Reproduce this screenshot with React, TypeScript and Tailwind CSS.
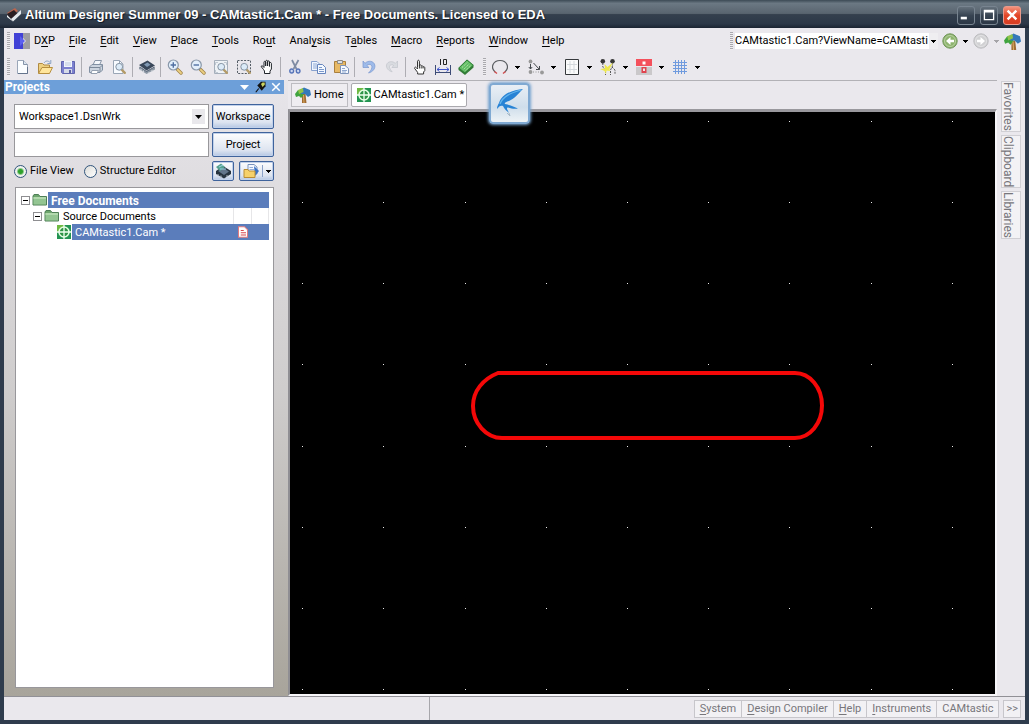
import React from "react";

type IconProps = { children: React.ReactNode; size?: string; box?: string };

function Icon({ children, size = "size-4", box = "0 0 16 16" }: IconProps) {
  return (
    <svg viewBox={box} className={`${size} shrink-0`} fill="none" aria-hidden="true">
      {children}
    </svg>
  );
}

const Caret = ({ color = "#000" }: { color?: string }) => (
  <svg viewBox="0 0 5 3" className="h-[3px] w-[5px] shrink-0" aria-hidden="true" shapeRendering="crispEdges">
    <path d="M0 0H5V1H4V2H3V3H2V2H1V1H0Z" fill={color} />
  </svg>
);

const Grip = () => (
  <span className="h-[18px] w-[3px] shrink-0 bg-[repeating-linear-gradient(to_bottom,#a9a8ad_0_1px,#efeef1_1px_2px)]" />
);

const Glass = () => (
  <>
    <path d="M10.5 10.5L14 14" stroke="#a18448" strokeWidth="3.4" strokeLinecap="round" />
    <path d="M10.8 10.8L14 14" stroke="#ecd083" strokeWidth="1.8" strokeLinecap="round" />
    <circle cx="6.3" cy="6" r="5" fill="#e2effb" stroke="#8998aa" strokeWidth="1.2" />
  </>
);

const SmallGlass = () => (
  <>
    <path d="M10.5 10.5L13.8 13.8" stroke="#b39b68" strokeWidth="2.4" strokeLinecap="round" />
    <circle cx="8.2" cy="7.8" r="3.4" fill="#dcebf8" stroke="#8593a3" />
  </>
);

const icons = {
  fresh: (
    <>
      <path d="M3.5 1.5H9.5L13.5 5.5V14.5H3.5Z" fill="#fbfdff" stroke="#9aa6b8" />
      <path d="M9.5 1.5V5.5H13.5" fill="#dbe5f1" stroke="#8593a8" />
      <path d="M4 14.5H13.5V8" stroke="#64748c" />
    </>
  ),
  open: (
    <>
      <path d="M1.5 14V4.5H5.5L7 6H12.5V14Z" fill="#eed080" stroke="#b08a42" />
      <path d="M1.5 14.5L5 8.5H15.5L12.5 14.5Z" fill="#ffe59b" stroke="#b68e3f" />
      <path d="M7 4C8.5 1.5 11 1.5 13 3.4M13.8 1V4.5H10.4" stroke="#8ba3c4" />
    </>
  ),
  save: (
    <>
      <path d="M1.5 2.5H14.5V14.5H2.5L1.5 13.5Z" fill="#7c80cf" stroke="#6065ad" />
      <path d="M4 2H12V8H4Z" fill="#f1f5fb" />
      <path d="M5 4H11M5 6H11" stroke="#bdc8dd" />
      <path d="M4 10H12V14H4Z" fill="#d6dbe8" />
      <path d="M9 11H11V14H9Z" fill="#5b60a3" />
    </>
  ),
  print: (
    <>
      <path d="M5 6L7 1.5H13.5L11.5 6Z" fill="#f5f8fc" stroke="#8794a6" />
      <path d="M1.5 8L4 5.5H14.5V11L12 13.5H1.5Z" fill="#ccd4df" stroke="#8190a3" />
      <path d="M1.5 8.5H12L14.5 6M12 8.5V13" stroke="#7c899a" />
      <path d="M4 11.5H10.5L9 14.5H3Z" fill="#fff" stroke="#95a0b0" />
    </>
  ),
  preview: (
    <>
      <path d="M2.5 1.5H8.5L12 5V14.5H2.5Z" fill="#f8fbff" stroke="#9aa6b6" />
      <path d="M8.5 1.5V5H12" stroke="#9aa6b6" />
      <SmallGlass />
    </>
  ),
  chip: (
    <>
      <path d="M0 7.5L7 12L16 8V10.5L7.5 15L0 10Z" fill="#8d98a4" />
      <path d="M0 6L8.5 1.5L16 6.5L7.5 11.5Z" fill="#39475a" />
      <path d="M5 5.5L8.5 3.5L11.5 5.7L8 8Z" fill="#8199b4" />
      <path d="M1 8L7.5 12.5L15.5 8" stroke="#59677a" />
      <path d="M2 10V12M4.5 11.5V13.5M10 13V14.5M13 11V13" stroke="#d5dae0" />
    </>
  ),
  zoomIn: (
    <>
      <Glass />
      <path d="M3.6 6H9M6.3 3.3V8.7" stroke="#4f70a2" strokeWidth="1.4" />
    </>
  ),
  zoomOut: (
    <>
      <Glass />
      <path d="M3.6 6H9" stroke="#4f70a2" strokeWidth="1.4" />
    </>
  ),
  zoomFit: (
    <>
      <path d="M1.5 1.5H14.5V14.5H1.5Z" fill="#eef2f6" stroke="#a5afbb" />
      <path d="M2.5 6V3.5H5M11 3.5H13.5V6M2.5 11V13.5H5" stroke="#c0c8d2" />
      <SmallGlass />
    </>
  ),
  zoomArea: (
    <>
      <path d="M1.5 1.5H14.5V14.5H1.5Z" stroke="#555d66" strokeDasharray="2 1.3" />
      <SmallGlass />
    </>
  ),
  hand: (
    <path
      d="M4.5 10.5L2.5 8C1.8 6.8 3 6.3 3.8 7.2L5 8.5V3.2C5 2 6.5 2 6.7 3.2V7V2.2C7 1 8.4 1 8.6 2.2V7V2.7C8.9 1.6 10.3 1.6 10.5 2.8V7.4V4.2C10.9 3.2 12.2 3.3 12.4 4.4V10L11 12.2V14.5H5.5V12Z"
      fill="#fff"
      stroke="#20242a"
    />
  ),
  cut: (
    <>
      <path d="M5 1L9.5 10M11.5 1L6.5 10" stroke="#7e8ba3" strokeWidth="1.7" />
      <path d="M4.5 10C2.2 10 2.2 14 4.7 14C7 14 7.5 10 4.5 10ZM11 10C8.5 10 8.9 14 11.2 14C13.7 14 13.5 10 11 10Z" fill="#cdd8f0" stroke="#5674b8" strokeWidth="1.4" />
    </>
  ),
  copy: (
    <>
      <path d="M1.5 2.5H7L9.5 5V11.5H1.5Z" fill="#f1f6ff" stroke="#86a0ce" />
      <path d="M3 5H7M3 7H8M3 9H8" stroke="#8fa8d3" />
      <path d="M7.5 5.5H12.5L15.5 8.5V14.5H7.5Z" fill="#f5f9ff" stroke="#6685bd" />
      <path d="M9 8.5H12M9 10.5H14M9 12.5H14" stroke="#7b98cb" />
    </>
  ),
  paste: (
    <>
      <path d="M1.5 2.5H12.5V13.5H1.5Z" fill="#e8b964" stroke="#a97f3d" />
      <path d="M4.5 1.5H9.5V4.5H4.5Z" fill="#d9dee5" stroke="#8e8a82" />
      <path d="M7.5 6.5H12L15.5 9.5V14.5H7.5Z" fill="#f5f9ff" stroke="#7d93b8" />
      <path d="M9 9.5H12M9 11.5H14M9 13H13" stroke="#90a8cf" />
    </>
  ),
  undo: (
    <path d="M2 2V8.5H8L5.8 6.5C8.5 4.2 11.8 6 10.8 9C10.3 11 9 12.4 7.5 14C12 12.8 14.5 9.5 13.8 6C12.7 1.8 7.2 1 4 4.3Z" fill="#9ebbea" stroke="#7897cf" strokeWidth=".7" />
  ),
  redo: (
    <path d="M13.5 2V8.5H7.8L9.8 6.6C7.5 4.8 4.8 6.2 5.6 8.8C6 10.3 7 11.5 8.2 12.8C4.5 12 2 9 2.5 6C3.4 2.3 8.5 1.5 11.4 4.4Z" fill="#d9dbe0" stroke="#c1c4cb" strokeWidth=".7" />
  ),
  pointer: (
    <path
      d="M5.5 8.5V2.2C5.8 .9 7.1 .9 7.4 2.2V7V6.3C8 5.4 9 5.7 9.2 6.7V7.3C9.8 6.3 10.8 6.7 11 7.6V8.2C11.6 7.3 12.7 7.6 12.8 8.7V11.5L11.6 13V15H5.6V13.3L2.6 9.4C2.4 8.1 3.7 7.7 4.3 8.6L5.5 10ZM7.4 7V9.5M9.2 7.5V9.5M11 8V9.5"
      fill="#fff"
      stroke="#333"
    />
  ),
  measure: (
    <>
      <path d="M.5 6V16M15.5 6V16M0 13.5H16" stroke="#3d4b76" />
      <path d="M2 10.5H14M4.5 8.5L2 10.5L4.5 12.5M11.5 8.5L14 10.5L11.5 12.5" stroke="#4055cd" />
      <path d="M5.5 0V6M8.5 .5H11.5V5.5H8.5Z" stroke="#222" />
    </>
  ),
  board: (
    <>
      <path d="M.5 9L9 .5L15.5 6V8.5L7 16L.5 11Z" fill="#357c38" />
      <path d="M.8 9L9 1L15.2 6.3L6.8 13.8Z" fill="#63bd66" stroke="#2b7933" strokeWidth=".8" />
      <path d="M4 8.5L9.4 3.5M5.8 10.2L11.2 5M7.500 11.6L13 6.5" stroke="#b3e6a7" strokeDasharray="1.5 .8" />
    </>
  ),
  arc: (
    <>
      <path d="M3 13C-2 8.5 1.2 1.5 8 1.5C14.8 1.5 18 8.5 13 13" stroke="#5a5d61" strokeWidth="1.2" />
      <path d="M2.5 12.5L5 14.5M13.5 12.5L11 14.5" stroke="#d0484a" strokeWidth="1.4" />
    </>
  ),
  nodes: (
    <>
      <circle cx="2.5" cy="2.5" r="1.9" fill="#999" />
      <circle cx="2.5" cy="13" r="1.9" fill="#999" />
      <circle cx="14" cy="13.5" r="1.9" fill="#999" />
      <path d="M2.5 5V10M.8 8L2.5 10L4.2 8M5.5 4L11.5 10.5M11.5 7V10.5H8" stroke="#44484c" />
      <path d="M5 13H11" stroke="#999" strokeDasharray="1 1.5" />
    </>
  ),
  rect: (
    <>
      <path d="M1.5 .5H14.5V15.5H1.5Z" fill="#fafafa" stroke="#35383b" />
      <path d="M3 5.5H13M3 10.5H13M6 2V14M10 2V14" stroke="#d4d8dc" />
    </>
  ),
  probes: (
    <>
      <path d="M2.8 4V8L5.5 11V16M12.5 3.5V7L10.5 11V16M12 8L15 11V15" stroke="#585858" strokeDasharray="2 1" />
      <circle cx="2.8" cy="2.3" r="2.3" fill="#353535" />
      <circle cx="12.5" cy="2.3" r="2.3" fill="#353535" />
      <path d="M0 10L5 9.5L4.5 5L7.5 8L13 3.5L9.5 10L10 12L6.5 11.5L6 15L4.5 12Z" fill="#eee84c" />
    </>
  ),
  pads: (
    <>
      <path d="M0 0H16V7H0Z" fill="#f4505c" />
      <path d="M0 8H16V16H0Z" fill="#cac8ca" />
      <path d="M5.5 8H10.5V14H5.5Z" fill="#e0434f" />
      <path d="M6.5 2.5H9.5V5.5H6.5Z" fill="#fff" />
      <path d="M7 9.5H9V12H7Z" fill="#f3e4e6" />
    </>
  ),
  grid: <path d="M3.5 1V15M6.5 1V15M9.5 1V15M12.5 1V15M1 3.5H15M1 6.5H15M1 9.5H15M1 12.5H15" stroke="#6f9ade" />,
};

const Tree = () => (
  <>
    <path d="M7 7H10.5L11.5 16H7Z" fill="#a06b32" />
    <path d="M0 7L3 3L7 4L9 8L6 11L4 9L1 10Z" fill="#3fa33e" />
    <path d="M5 3L9 .5L15 3L16 8L13 10L10 7L6 7Z" fill="#3479b9" />
    <path d="M3 3L8 1L8.5 5L4 7Z" fill="#8fc34a" />
    <path d="M8.5 8L9 16" stroke="#d9ad64" />
  </>
);

const CamGlyph = () => (
  <>
    <path d="M1 1H15V15H1Z" fill="#239451" />
    <path d="M1 1H8V8H1Z" fill="#6fba42" />
    <circle cx="8" cy="8" r="5" fill="#2e9446" stroke="#e6ffe3" strokeWidth="1.5" />
    <path d="M8 1V15M1 8H15" stroke="#effff0" strokeWidth="1.3" />
  </>
);

const Folder = () => (
  <>
    <path d="M1 13V4L2 2.5H6.5L8 4.5H14.5V13Z" fill="#6da56d" stroke="#4e7f56" />
    <path d="M1.5 5H14V12.5H1.5Z" fill="#93c592" />
    <path d="M1.5 5H14V7H1.5Z" fill="#b2d9ad" />
  </>
);

const Chip3D = () => (
  <>
    <path d="M1 8L8 3L16 8V11L9 15.5L1 11Z" fill="#26333f" />
    <path d="M3 8L8.5 5L14 8.5L9 12Z" fill="#62758a" />
    <path d="M1 4L6 .5L10 4L5 8Z" fill="#55a18f" />
    <path d="M4 4L8 2M5 6L11 6" stroke="#98d1e2" />
    <path d="M3 11V13M6 12.5V15M12 12V14" stroke="#b4bdc6" />
  </>
);

type Tool = { name: string; icon: React.ReactNode };

const toolGroups: Tool[][] = [
  [
    { name: "New", icon: icons.fresh },
    { name: "Open", icon: icons.open },
    { name: "Save", icon: icons.save },
  ],
  [
    { name: "Print", icon: icons.print },
    { name: "Print preview", icon: icons.preview },
  ],
  [{ name: "Devices", icon: icons.chip }],
  [
    { name: "Zoom in", icon: icons.zoomIn },
    { name: "Zoom out", icon: icons.zoomOut },
    { name: "Fit document", icon: icons.zoomFit },
    { name: "Zoom area", icon: icons.zoomArea },
    { name: "Pan", icon: icons.hand },
  ],
  [
    { name: "Cut", icon: icons.cut },
    { name: "Copy", icon: icons.copy },
    { name: "Paste", icon: icons.paste },
  ],
  [
    { name: "Undo", icon: icons.undo },
    { name: "Redo", icon: icons.redo },
  ],
  [
    { name: "Query", icon: icons.pointer },
    { name: "Measure", icon: icons.measure },
    { name: "Board", icon: icons.board },
  ],
];

const dropTools: Tool[] = [
  { name: "Arc", icon: icons.arc },
  { name: "Nodes", icon: icons.nodes },
  { name: "Rectangle", icon: icons.rect },
  { name: "Probes", icon: icons.probes },
  { name: "Pads", icon: icons.pads },
  { name: "Grid", icon: icons.grid },
];

/* The letter after the "&" is the access key and is underlined. */
function Accel({ label }: { label: string }) {
  const at = label.indexOf("&");
  if (at < 0) return <>{label}</>;
  return (
    <>
      {label.slice(0, at)}
      <span className="underline underline-offset-2">{label[at + 1]}</span>
      {label.slice(at + 2)}
    </>
  );
}

const menus = ["&File", "&Edit", "&View", "&Place", "&Tools", "Ro&ut", "Anal&ysis", "T&ables", "&Macro", "&Reports", "&Window", "&Help"];

function TitleBar() {
  const box = "flex h-[19px] w-[18px] items-center justify-center rounded-[3px] border";
  return (
    <header className="flex h-7 shrink-0 items-center bg-[linear-gradient(to_bottom,#3c4a55_0%,#6b7883_12%,#59646f_48%,#343f4d_52%,#2c3848_85%,#1b2432_100%)] pt-0.5 pr-2 pl-1.5">
      <Icon>
        <path d="M1 6L9 1L12 4L4 9.5Z" fill="#b9654e" />
        <path d="M1 7L8 3L12 7L5 12Z" fill="#2a1e22" />
        <path d="M5 12L15 3V7L7 14.5Z" fill="#e4e8ec" />
        <path d="M1 8L5 12L7 14.5L1 10Z" fill="#f8fafb" />
      </Icon>
      <h1 className="ml-[3px] flex-1 truncate font-['Liberation_Sans',Arial,sans-serif] text-[13px] leading-4 font-bold text-white [text-shadow:1px_1px_1px_#111a26]">
        Altium Designer Summer 09 - CAMtastic1.Cam * - Free Documents. Licensed to EDA
      </h1>
      <div className="flex gap-[5px]">
        <button aria-label="Minimize" className={`${box} border-[#788490] bg-[linear-gradient(#65717c,#384452_50%,#2c3746)]`}>
          <Icon size="size-3.5"><path d="M2 10H9V13H2Z" fill="#fff" /></Icon>
        </button>
        <button aria-label="Maximize" className={`${box} border-[#788490] bg-[linear-gradient(#65717c,#384452_50%,#2c3746)]`}>
          <Icon size="size-3.5"><path d="M2 2H14V14H2ZM3.5 5V12.5H12.5V5Z" fill="#fff" fillRule="evenodd" /></Icon>
        </button>
        <button aria-label="Close" className={`${box} border-[#e99a8c] bg-[linear-gradient(#f4927c,#e34628_50%,#d63d22)]`}>
          <Icon size="size-3.5"><path d="M3 3L13 13M13 3L3 13" stroke="#fff" strokeWidth="2.8" /></Icon>
        </button>
      </div>
    </header>
  );
}

function MenuBar() {
  return (
    <div className="flex h-[26px] shrink-0 items-center pr-1 pl-[3px]">
      <Grip />
      <nav className="ml-1 flex flex-1 items-center gap-3.5" aria-label="Main menu">
        <button className="flex items-center gap-1">
          <Icon>
            <path d="M0 0H9V16H0Z" fill="#4141d6" />
            <path d="M9 0H16V16H9V11L12 8L9 5Z" fill="#9d9da2" />
            <path d="M6 3L11 8L6 13Z" fill="#5b60ef" />
          </Icon>
          <span><Accel label="D&XP" /></span>
        </button>
        {menus.map((m) => (
          <button key={m}><Accel label={m} /></button>
        ))}
      </nav>
      <Grip />
      <div className="relative ml-0.5 flex items-center">
        <select aria-label="Address" className="h-4 w-[203px] appearance-none bg-white pr-2">
          <option>CAMtastic1.Cam?ViewName=CAMtasti</option>
        </select>
        <span className="pointer-events-none absolute right-0 flex h-4 w-[9px] items-center justify-center bg-[#efeef1]"><Caret /></span>
      </div>
      <button aria-label="Back" className="ml-1">
        <Icon><circle cx="8" cy="8" r="7.2" fill="#8eb46f" stroke="#71955a" /><circle cx="8" cy="8" r="5.5" stroke="#b9d2a2" /><path d="M8.5 4L4 8L8.5 12V9.3H12V6.7H8.5Z" fill="#fff" /></Icon>
      </button>
      <button aria-label="Back history" className="flex h-4 w-[15px] items-center justify-center"><Caret /></button>
      <button aria-label="Forward">
        <Icon><circle cx="8" cy="8" r="7.2" fill="#d1d1d3" stroke="#bcbcbf" /><circle cx="8" cy="8" r="5.5" stroke="#e2e2e4" /><path d="M7.5 4L12 8L7.5 12V9.3H4V6.7H7.5Z" fill="#fff" /></Icon>
      </button>
      <button aria-label="Forward history" className="flex h-4 w-[15px] items-center justify-center"><Caret color="#a5a4a8" /></button>
      <button aria-label="Home page"><Icon size="size-[17px]"><Tree /></Icon></button>
    </div>
  );
}

function ToolBar() {
  return (
    <div className="flex h-[26px] shrink-0 items-center pl-[3px]" role="toolbar" aria-label="Standard">
      <Grip />
      <div className="flex items-center">
        {toolGroups.map((group, i) => (
          <React.Fragment key={i}>
            {i > 0 && <span className="mx-0.5 h-5 w-px bg-[#aeadb3]" />}
            {group.map((t) => (
              <button key={t.name} aria-label={t.name} className="flex h-6 w-[23px] items-center justify-center"><Icon>{t.icon}</Icon></button>
            ))}
          </React.Fragment>
        ))}
      </div>
      <span className="w-1.5" />
      <Grip />
      <div className="ml-0.5 flex items-center">
        {dropTools.map((t) => (
          <button key={t.name} aria-label={t.name} className="flex h-6 w-9 items-center">
            <span className="flex w-[23px] justify-center"><Icon>{t.icon}</Icon></span>
            <span className="ml-1"><Caret /></span>
          </button>
        ))}
      </div>
    </div>
  );
}

const Expander = () => (
  <button aria-label="Collapse" className="flex size-[9px] shrink-0 items-center justify-center border border-[#8e8e91] bg-white">
    <span className="h-px w-[5px] bg-black" />
  </button>
);

const xpButton =
  "flex items-center justify-center rounded-[2px] border border-[#3f639c] bg-[linear-gradient(#fdfdfe,#dde4f0_75%,#b4c6e3)] shadow-[inset_0_0_0_1px_#c1d1ea]";
const radio =
  "size-[13px] appearance-none rounded-full border border-[#31557c] bg-[linear-gradient(135deg,#dcdcd8,#fff)] checked:bg-[radial-gradient(circle,#2da12b_0_2px,#eef1ee_4px)]";

function ProjectsPanel() {
  return (
    <aside className="flex w-[284px] shrink-0 flex-col bg-[linear-gradient(#e7e5ea,#cfcdcd_50%,#a8a49b)]">
      <div className="mr-1 flex h-3.5 items-center bg-[#6d9fd9] pr-[3px] text-xs leading-4 font-bold text-white">
        <h2 className="flex-1 pl-px">Projects</h2>
        <button aria-label="Panel menu" className="mr-1.5">
          <svg viewBox="0 0 9 5" className="h-[5px] w-[9px]" aria-hidden="true"><path d="M0 0H9L4.5 5Z" fill="#fff" /></svg>
        </button>
        <button aria-label="Pin panel" className="mr-1">
          <Icon size="size-3">
            <path d="M1 15L5 10" stroke="#111" strokeWidth="1.6" />
            <path d="M3 6L8 1H14V7L9 13Z" fill="#141414" />
            <path d="M8 4L10 2H13V5L10 8Z" fill="#c9d363" />
          </Icon>
        </button>
        <button aria-label="Close panel">
          <Icon size="size-2.5"><path d="M2 2L14 14M14 2L2 14" stroke="#fff" strokeWidth="2.4" /></Icon>
        </button>
      </div>
      <form className="flex flex-col pt-2.5 pr-3.5 pl-2.5" onSubmit={(e) => e.preventDefault()}>
        <div className="grid grid-cols-[195px_62px] gap-[3px]">
          <div className="relative flex">
            <select aria-label="Current workspace" className="h-[25px] w-full appearance-none border border-[#98979b] bg-white pl-1">
              <option>Workspace1.DsnWrk</option>
            </select>
            <span className="pointer-events-none absolute top-[5px] right-1 flex h-[15px] w-[13px] items-center justify-center bg-[#e9e8ec]">
              <svg viewBox="0 0 7 4" className="h-1 w-[7px]" aria-hidden="true"><path d="M0 0H7L3.5 4Z" fill="#000" /></svg>
            </span>
          </div>
          <button type="button" className={`${xpButton} h-[25px]`}>Workspace</button>
          <input aria-label="Project name" className="h-[25px] min-w-0 border border-[#98979b] bg-white px-1" />
          <button type="button" className={`${xpButton} h-[25px]`}>Project</button>
        </div>
        <div className="mt-1 flex h-5 items-center">
          <label className="flex items-center gap-[3px]"><input type="radio" name="view" defaultChecked className={radio} />File View</label>
          <label className="ml-2.5 flex flex-1 items-center gap-[3px]"><input type="radio" name="view" className={radio} />Structure Editor</label>
          <button type="button" aria-label="Compile" className={`${xpButton} h-5 w-[22px]`}><Icon><Chip3D /></Icon></button>
          <button type="button" aria-label="Project options" className={`${xpButton} ml-[5px] h-5 w-[35px] gap-[3px]`}>
            <Icon>
              <path d="M5 1.5H11L14 4V11H5Z" fill="#f4f8ff" stroke="#7892bd" />
              <path d="M6.5 4.5H10M6.5 6.5H11" stroke="#96aed8" />
              <path d="M11 3L16 8L12 13Z" fill="#3b72c5" />
              <path d="M1 6.5H5L6 8H12V14.5H1Z" fill="#f6d16b" stroke="#ba8d35" />
            </Icon>
            <span className="h-3 w-px bg-[#8ba2c8]" />
            <Caret />
          </button>
        </div>
      </form>
      <div className="mt-1.5 mr-3.5 mb-2 ml-[11px] flex-1 border border-[#98979b] bg-white pt-1 pr-1 pl-[5px]" role="tree" aria-label="Projects">
        <div className="flex h-4 items-center" role="treeitem">
          <Expander />
          <span className="ml-0.5 flex"><Icon><Folder /></Icon></span>
          <span className="h-4 flex-1 bg-[#5b7dbb] pl-[3px] text-xs leading-[18px] font-bold text-white">Free Documents</span>
        </div>
        <div className="flex h-4 items-center pl-3" role="treeitem">
          <Expander />
          <span className="ml-0.5 flex"><Icon><Folder /></Icon></span>
          <span className="h-4 flex-1 pl-[3px] leading-[18px]">Source Documents</span>
          <span className="h-4 w-[18px] border-l border-[#e6e6e8]" />
          <span className="h-4 w-[18px] border-x border-[#e6e6e8]" />
        </div>
        <div className="flex h-4 items-center pl-[35px]" role="treeitem" aria-selected="true">
          <Icon><CamGlyph /></Icon>
          <span className="flex h-4 flex-1 items-center justify-between bg-[#5b7dbb] pr-5 pl-[3px] leading-[18px] text-white">
            <span className="h-4">CAMtastic1.Cam *</span>
            <Icon size="size-3">
              <path d="M2 1H10L14 5V15H2Z" fill="#fff" stroke="#e07b80" strokeWidth="1.4" />
              <path d="M5 6H9M5 9H12M5 12H12" stroke="#d9474e" strokeWidth="1.4" />
            </Icon>
          </span>
        </div>
      </div>
    </aside>
  );
}

const columns = [12, 93, 175, 256, 337, 418, 499, 581, 662];
const rows = [9, 90, 171, 252, 334, 415, 496, 577];

function Workspace() {
  return (
    <main className="flex min-w-0 flex-1 flex-col border-t border-[#b2b1b6]">
      <div className="relative flex h-7 shrink-0 items-start gap-[3px] pt-0.5 pl-[3px]">
        <button className="flex h-6 items-center gap-[3px] border border-[#bdbcc1] bg-[#efedf1] px-[3px]">
          <Icon><Tree /></Icon>Home
        </button>
        <button className="flex h-6 items-center gap-0.5 rounded-[2px] border border-[#aaa9ae] bg-white pr-0.5 pl-1">
          <Icon><CamGlyph /></Icon>CAMtastic1.Cam *
        </button>
        <button aria-label="Bird launcher" className="absolute top-0.5 left-[201px] z-10 flex size-[41px] items-center justify-center rounded-[4px] border-2 border-[#7fa9d2] bg-[linear-gradient(#e9eff5,#cfdeeb_60%,#eef3f6)] shadow-[0_0_3px_1px_#78a4cf]">
          <Icon size="size-[37px]" box="2 2 37 37">
            <path d="M34 6C25 7 13 10 10 20C9 22 8 23 8 26C10 23 12 22 14 23C15 26 18 28 20 30L18 26C18 25 18 24.5 19 24.5C23 26 26 26 29 25.5C25 24 21 22 16 21C15 20 17 19 20 18C25 16 29 11 34 6Z" fill="#2783d5" />
            <path d="M32 7C22 10 14 13 11 21" stroke="#64b5ed" strokeWidth="1.3" />
            <path d="M18 30L21 33L20 30" stroke="#a9bac8" />
          </Icon>
        </button>
      </div>
      <div className="flex-1 border-t-[3px] border-r-2 border-b-2 border-l-2 border-t-[#99989d] border-r-[#f7f6f9] border-b-[#f7f6f9] border-l-[#8f8e93] bg-black">
        <svg className="block h-full w-full" role="img" aria-label="Board drawing">
          {rows.map((y) => columns.map((x) => <rect key={`${x}-${y}`} x={x} y={y} width="1" height="1" fill="#e8e8e8" />))}
          <path d="M208 261H505A27 32.5 0 0 1 505 326H212C196 326 183 311 183 294C183 279 193 267 208 261Z" fill="none" stroke="#f40808" strokeWidth="4" />
        </svg>
      </div>
    </main>
  );
}

function SideTabs() {
  return (
    <div className="flex w-7 shrink-0 flex-col items-start gap-[3px] pt-px pl-1 text-xs text-[#77767b]">
      {["Favorites", "Clipboard", "Libraries"].map((t) => (
        <button key={t} className="w-5 border border-[#d0cfd4] bg-[#f3f2f5] py-1 [writing-mode:vertical-rl]">{t}</button>
      ))}
    </div>
  );
}

function StatusBar() {
  return (
    <footer className="flex h-6 shrink-0 items-center border-t border-[#919096] bg-[#eae8ed] pr-1 text-[#77767b]">
      <span className="h-full w-[426px] border-r border-[#a7a6ab]" />
      <span className="flex-1" />
      <div className="flex divide-x divide-[#c7c6cb] border border-[#c7c6cb] bg-[#f2f1f4]">
        {["&System", "&Design Compiler", "&Help", "&Instruments", "CAMtastic"].map((t) => (
          <button key={t} className="h-4 px-[5px] leading-4"><Accel label={t} /></button>
        ))}
      </div>
      <button className="ml-1 h-[18px] border border-[#c7c6cb] bg-[#f2f1f4] px-0.5 leading-4">&gt;&gt;</button>
    </footer>
  );
}

export default function App() {
  return (
    <div className="flex h-screen flex-col bg-[#26313f] font-[Roboto,Arial,sans-serif] text-[11px] leading-4 text-black">
      <TitleBar />
      <div className="flex min-h-0 flex-1 flex-col border-x-4 border-b-4 border-[#2f3c4d] bg-[#eae8ed]">
        <MenuBar />
        <ToolBar />
        <div className="flex min-h-0 flex-1">
          <ProjectsPanel />
          <Workspace />
          <SideTabs />
        </div>
        <StatusBar />
      </div>
    </div>
  );
}
